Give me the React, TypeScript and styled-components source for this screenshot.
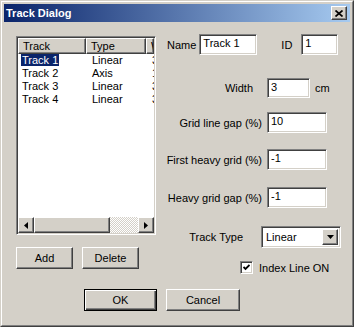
import styled, { createGlobalStyle } from 'styled-components';

const GlobalStyle = createGlobalStyle`
  html, body {
    margin: 0;
    padding: 0;
    background: #d4d0c8;
  }
  body {
    font-family: "Liberation Sans", Arial, sans-serif;
    font-size: 11px;
    color: #000;
  }
  * {
    box-sizing: border-box;
  }
`;

const Window = styled.div`
  width: 354px;
  height: 327px;
  border: 1px solid;
  border-color: #d4d0c8 #404040 #404040 #d4d0c8;
  background: #d4d0c8;
`;

const Frame = styled.div`
  height: 100%;
  border: 1px solid;
  border-color: #fff #808080 #808080 #fff;
  padding: 2px;
  display: flex;
  flex-direction: column;
`;

const TitleBar = styled.div`
  height: 18px;
  flex-shrink: 0;
  display: flex;
  align-items: center;
  justify-content: space-between;
  padding: 0 3px 0 2px;
  background: linear-gradient(to right, #0a246a, #a6caf0);
`;

const Title = styled.span`
  color: #fff;
  font-weight: bold;
  font-size: 11px;
`;

const raised = `
  background: #d4d0c8;
  border: 1px solid;
  border-color: #fff #404040 #404040 #fff;
  box-shadow: inset -1px -1px #808080;
`;

const sunken = `
  background: #fff;
  border: 1px solid;
  border-color: #808080 #fff #fff #808080;
  box-shadow: inset 1px 1px #404040, inset -1px -1px #d4d0c8;
`;

const CloseButton = styled.div`
  ${raised}
  width: 16px;
  height: 14px;
  display: flex;
  align-items: center;
  justify-content: center;
`;

const Content = styled.div`
  flex: 1;
  display: flex;
  flex-direction: column;
  padding-bottom: 12px;
`;

const Main = styled.div`
  display: flex;
`;

const LeftPane = styled.div`
  width: 152px;
  flex-shrink: 0;
  padding: 14px 0 0 12px;
`;

const ListView = styled.div`
  ${sunken}
  width: 140px;
  height: 199px;
  padding: 1px;
  display: flex;
  flex-direction: column;
  overflow: hidden;
`;

const Header = styled.div`
  display: flex;
  height: 16px;
  flex-shrink: 0;
`;

const HeaderCell = styled.div<{ $width: number }>`
  ${raised}
  width: ${p => p.$width}px;
  flex-shrink: 0;
  padding-left: 4px;
  line-height: 14px;
  white-space: nowrap;
  overflow: hidden;
`;

const Rows = styled.div`
  flex: 1;
`;

const Row = styled.div`
  display: flex;
  height: 13px;
  line-height: 13px;
`;

const Cell = styled.div<{ $width: number }>`
  width: ${p => p.$width}px;
  flex-shrink: 0;
  padding-left: 6px;
  white-space: nowrap;
  overflow: hidden;

  &:first-child {
    padding-left: 3px;
  }
`;

const ItemText = styled.span<{ $selected?: boolean }>`
  padding: 0 1px;
  background: ${p => (p.$selected ? '#0a246a' : 'transparent')};
  color: ${p => (p.$selected ? '#fff' : '#000')};
`;

const ScrollBar = styled.div`
  display: flex;
  height: 16px;
  flex-shrink: 0;
`;

const ScrollArrow = styled.div`
  ${raised}
  width: 16px;
  height: 16px;
  display: flex;
  align-items: center;
  justify-content: center;
`;

const ScrollThumb = styled.div<{ $width: number }>`
  ${raised}
  width: ${p => p.$width}px;
  height: 16px;
`;

const ScrollTrack = styled.div`
  flex: 1;
  background: repeating-conic-gradient(#fff 0 25%, #d4d0c8 0 50%) 0 0 / 2px 2px;
`;

const ButtonRow = styled.div`
  display: flex;
  gap: 9px;
  margin-top: 12px;
`;

const PushButton = styled.button<{ $width: number; $default?: boolean }>`
  width: ${p => p.$width}px;
  height: 22px;
  padding: 0;
  font: inherit;
  color: #000;
  background: #d4d0c8;
  border: 1px solid;
  border-color: ${p => (p.$default ? '#000' : '#fff #404040 #404040 #fff')};
  box-shadow: ${p =>
    p.$default
      ? 'inset 1px 1px #fff, inset -1px -1px #404040, inset -2px -2px #808080'
      : 'inset -1px -1px #808080'};
`;

const RightPane = styled.div`
  flex: 1;
  display: flex;
  flex-direction: column;
`;

const NameRow = styled.div`
  display: flex;
  align-items: center;
  height: 21px;
  margin-top: 12px;
  padding-left: 11px;
`;

const InlineLabel = styled.span<{ $before?: number; $after?: number }>`
  margin-left: ${p => p.$before ?? 0}px;
  margin-right: ${p => p.$after ?? 0}px;
  white-space: nowrap;
`;

const TextBox = styled.input<{ $width: number; $height: number }>`
  ${sunken}
  width: ${p => p.$width}px;
  height: ${p => p.$height}px;
  padding: 0 0 3px 3px;
  font: inherit;
  color: #000;
  outline: none;
`;

const FieldRow = styled.div<{ $top: number; $indent?: number }>`
  display: flex;
  align-items: center;
  margin-top: ${p => p.$top}px;
  padding-left: ${p => p.$indent ?? 0}px;
`;

const FieldLabel = styled.span<{ $width: number; $gap: number }>`
  width: ${p => p.$width}px;
  margin-right: ${p => p.$gap}px;
  flex-shrink: 0;
  text-align: right;
  white-space: nowrap;
`;

const Combo = styled.div`
  ${sunken}
  width: 80px;
  height: 22px;
  padding: 2px;
  display: flex;
  align-items: stretch;
`;

const ComboValue = styled.div`
  flex: 1;
  padding-left: 2px;
  line-height: 16px;
`;

const DropButton = styled.div`
  ${raised}
  width: 16px;
  display: flex;
  align-items: center;
  justify-content: center;
`;

const CheckBox = styled.div`
  ${sunken}
  width: 13px;
  height: 13px;
  display: flex;
  align-items: center;
  justify-content: center;
  margin-right: 6px;
`;

const Footer = styled.div`
  margin-top: auto;
  display: flex;
  gap: 9px;
  padding-left: 80px;
`;

const tracks = [
  { name: 'Track 1', type: 'Linear', width: '3' },
  { name: 'Track 2', type: 'Axis', width: '1' },
  { name: 'Track 3', type: 'Linear', width: '3' },
  { name: 'Track 4', type: 'Linear', width: '3' },
];

// the third column only peeks in at the list's right edge
const columns = [
  { title: 'Track', width: 68 },
  { title: 'Type', width: 60 },
  { title: 'Width', width: 8 },
];

function Arrow({ dir }: { dir: 'left' | 'right' | 'down' }) {
  if (dir === 'down') {
    return (
      <svg width="7" height="4" viewBox="0 0 7 4">
        <path d="M0 0h7L3.5 4z" fill="#000" />
      </svg>
    );
  }
  return (
    <svg width="4" height="7" viewBox="0 0 4 7">
      <path d={dir === 'left' ? 'M4 0v7L0 3.5z' : 'M0 0v7L4 3.5z'} fill="#000" />
    </svg>
  );
}

export default function App() {
  return (
    <>
      <GlobalStyle />
      <Window>
        <Frame>
          <TitleBar>
            <Title>Track Dialog</Title>
            <CloseButton>
              <svg width="8" height="7" viewBox="0 0 8 7">
                <path d="M0.5 0.5L7.5 6.5M7.5 0.5L0.5 6.5" stroke="#000" strokeWidth="1.7" />
              </svg>
            </CloseButton>
          </TitleBar>
          <Content>
            <Main>
              <LeftPane>
                <ListView>
                  <Header>
                    {columns.map(c => (
                      <HeaderCell key={c.title} $width={c.width}>{c.title}</HeaderCell>
                    ))}
                  </Header>
                  <Rows>
                    {tracks.map((t, i) => (
                      <Row key={t.name}>
                        <Cell $width={columns[0].width}><ItemText $selected={i === 0}>{t.name}</ItemText></Cell>
                        <Cell $width={columns[1].width}>{t.type}</Cell>
                        <Cell $width={columns[2].width}>{t.width}</Cell>
                      </Row>
                    ))}
                  </Rows>
                  <ScrollBar>
                    <ScrollArrow><Arrow dir="left" /></ScrollArrow>
                    <ScrollThumb $width={76} />
                    <ScrollTrack />
                    <ScrollArrow><Arrow dir="right" /></ScrollArrow>
                  </ScrollBar>
                </ListView>
                <ButtonRow>
                  <PushButton $width={57}>Add</PushButton>
                  <PushButton $width={57}>Delete</PushButton>
                </ButtonRow>
              </LeftPane>
              <RightPane>
                <NameRow>
                  <InlineLabel $after={3}>Name</InlineLabel>
                  <TextBox $width={58} $height={21} readOnly value="Track 1" />
                  <InlineLabel $before={24} $after={9}>ID</InlineLabel>
                  <TextBox $width={37} $height={21} readOnly value="1" />
                </NameRow>
                <FieldRow $top={23}>
                  <FieldLabel $width={97} $gap={14}>Width</FieldLabel>
                  <TextBox $width={43} $height={20} readOnly value="3" />
                  <InlineLabel $before={5}>cm</InlineLabel>
                </FieldRow>
                <FieldRow $top={14}>
                  <FieldLabel $width={106} $gap={5}>Grid line gap (%)</FieldLabel>
                  <TextBox $width={60} $height={21} readOnly value="10" />
                </FieldRow>
                <FieldRow $top={16}>
                  <FieldLabel $width={106} $gap={5}>First heavy grid (%)</FieldLabel>
                  <TextBox $width={60} $height={21} readOnly value="-1" />
                </FieldRow>
                <FieldRow $top={17}>
                  <FieldLabel $width={106} $gap={5}>Heavy grid gap (%)</FieldLabel>
                  <TextBox $width={60} $height={21} readOnly value="-1" />
                </FieldRow>
                <FieldRow $top={18}>
                  <FieldLabel $width={87} $gap={18}>Track Type</FieldLabel>
                  <Combo>
                    <ComboValue>Linear</ComboValue>
                    <DropButton><Arrow dir="down" /></DropButton>
                  </Combo>
                </FieldRow>
                <FieldRow $top={13} $indent={84}>
                  <CheckBox>
                    <svg width="7" height="7" viewBox="0 0 7 7">
                      <path d="M0.5 3L2.5 5L6.5 1" stroke="#000" strokeWidth="1.8" fill="none" />
                    </svg>
                  </CheckBox>
                  <span>Index Line ON</span>
                </FieldRow>
              </RightPane>
            </Main>
            <Footer>
              <PushButton $width={73} $default>OK</PushButton>
              <PushButton $width={74}>Cancel</PushButton>
            </Footer>
          </Content>
        </Frame>
      </Window>
    </>
  );
}
